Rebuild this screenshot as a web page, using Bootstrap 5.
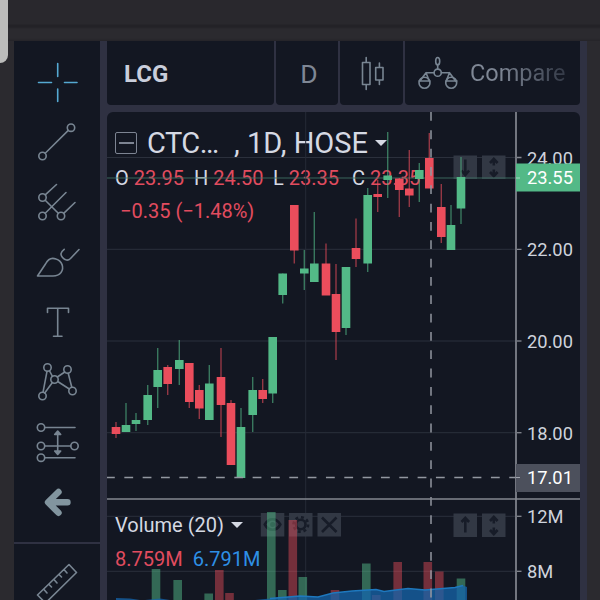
<!DOCTYPE html>
<html lang="en">
  <head>
    <meta charset="UTF-8" />
    <meta name="viewport" content="width=device-width, initial-scale=1.0" />
    <title>LCG Chart</title>
    <!-- Bootstrap CSS -->
    <link
      href="https://cdn.jsdelivr.net/npm/bootstrap@5.3.0/dist/css/bootstrap.min.css"
      rel="stylesheet"
    />
    <style>
      body {
        background: #2b2a2f;
        color: #d5d9e3;
        font-family: Roboto, sans-serif;
        line-height: 1;
      }
      .bezel {
        height: 41px;
        background: linear-gradient(#29282d 0 24px, #232227 25px 27px, #2b2a2f 29px 38px, #252429);
      }
      .knob {
        width: 8px;
        height: 63px;
        background: #bcbcbb;
        border-bottom-right-radius: 8px;
      }
      .app-shell {
        height: 559px;
        margin-left: 14px;
        margin-right: 13px;
        background: #2f3142;
      }
      .tools {
        width: 86px;
        background: #131722;
        padding-top: 12px;
      }
      .tools svg,
      .top-tabs svg {
        fill: none;
        stroke: #788592;
        stroke-width: 1.6;
        stroke-linecap: round;
        stroke-linejoin: round;
      }
      .tools svg { flex: none; width: 60px; height: 60px; }
      .tools .active { stroke: #55a9d2; }
      .tools .back { stroke: #82959f; stroke-width: 6.4; }
      .tool-split { height: 2px; margin: 9px 0; background: #2f3142; }
      .workspace { width: 473px; margin-left: 7px; }
      .top-tabs { height: 64px; gap: 2px; margin-bottom: 7px; }
      .top-tabs > div {
        background: #131722;
        border-radius: 0 0 4px 4px;
        color: #7f8795;
      }
      .tab-symbol { width: 167px; padding: 2px 0 0 17px; }
      .tab-symbol span { font-size: 24px; font-weight: 700; color: #c9cedb; }
      .tab-day { width: 62px; font-size: 26.5px; padding: 3px 0 0 4px; }
      .tab-style { width: 63px; }
      .tab-compare span {
        font-size: 23.5px;
        padding-top: 2px;
        background: linear-gradient(90deg, #7f8795 30%, #333946);
        -webkit-background-clip: text;
        background-clip: text;
        color: transparent;
      }
      .chart-box {
        height: 488px;
        background: #131722;
        border-radius: 6px 6px 0 0;
      }
      .legend-main { padding: 15px 0 0 8px; }
      .legend-title { font-size: 29px; height: 32px; }
      .legend-title .ticker { margin-left: 10px; width: 87px; letter-spacing: -0.5px; }
      .fold-box { width: 22px; height: 22px; border: 1.5px solid #7d8492; border-radius: 2px; }
      .fold-box i { width: 15px; height: 1.5px; background: #7d8492; }
      .tri {
        margin-left: 7px;
        border-left: 6.5px solid transparent;
        border-right: 6.5px solid transparent;
        border-top: 6.5px solid #d5d9e3;
      }
      .ohlc { font-size: 20px; margin-top: 9px; }
      .ohlc > span { width: 79px; }
      .ohlc .down { margin-left: 5px; }
      .down { color: #e14c5f; }
      .avg { color: #2e90e6; }
      .legend-change { font-size: 20px; margin: 13px 0 0 5px; }
      .legend-volume { top: 403px; left: 8px; font-size: 20px; }
      .volume-values { margin-top: 14px; gap: 10px; }
      .plot text { font-size: 18.3px; fill: #cfd3dc; }
    </style>
  </head>
  <body class="overflow-hidden">
    <div class="bezel"></div>
    <div class="knob position-absolute top-0 start-0"></div>

    <div class="app-shell d-flex">
      <!-- Drawing tools -->
      <div class="tools d-flex flex-column align-items-center flex-shrink-0">
        <svg class="active" viewBox="0 0 60 60"><path d="M11.5 29.5H24.5M37.5 29.5H50M30.7 10.5V23.5M30.7 36V48.5" /></svg>
        <svg viewBox="0 0 60 60"><circle cx="15.5" cy="43" r="3.7" /><circle cx="44" cy="14.7" r="3.7" /><path d="M18.2 40.3L41.3 17.4" /></svg>
        <svg viewBox="0 0 60 60">
          <circle cx="15.5" cy="24.5" r="3.7" /><circle cx="15.5" cy="43" r="3.7" /><circle cx="34" cy="43" r="3.7" />
          <path d="M18.2 21.8L29.5 11.5M18.2 27.2L31.3 40.3M18.2 40.3L39 19.5M36.7 40.3L48 29.5" />
        </svg>
        <svg viewBox="0 0 60 60">
          <path d="M10.5 43L18.5 31C21 26 25 24.5 29 26C35 28 37.5 34.5 34 39.5C32 42 29.5 43 26 43Z" />
          <path d="M37.2 16.3C33 19.5 33.5 22 35.5 24.5C38 27.5 41 28 43.5 25.5L52 16.5" />
        </svg>
        <svg viewBox="0 0 60 60"><path d="M20.5 19.5V15.2H41.5V19.5M30.7 15.2V43.3M26.5 43.3H35" /></svg>
        <svg viewBox="0 0 60 60">
          <circle cx="20.5" cy="14.5" r="3.7" /><circle cx="40.5" cy="16.5" r="3.7" /><circle cx="27.5" cy="26.5" r="3.7" />
          <circle cx="45.5" cy="38" r="3.7" /><circle cx="15.5" cy="43" r="3.7" />
          <path d="M20 18.3L16 39.3M22.5 17.8L25.5 23.5M37.8 19L30.3 24M41.2 20.2L44.8 34.3M30.7 28.5L42.3 36M25.4 29.5L17.7 40" />
        </svg>
        <svg viewBox="0 0 60 60">
          <circle cx="14" cy="14.5" r="3.7" /><circle cx="14" cy="33" r="3.7" /><circle cx="47.5" cy="33" r="3.7" /><circle cx="14" cy="44.7" r="3.7" />
          <path d="M17.7 14.5H48M17.7 33H43.8M17.7 44.7H48M30.7 20V40" />
          <path fill="#788592" d="M27.7 21.5L30.7 18L33.7 21.5ZM27.7 38L30.7 41.5L33.7 38Z" />
        </svg>
        <svg class="back" viewBox="0 0 60 60"><path d="M31.5 19L21 29.3L31.5 39.8M22 29.3H40.5" /></svg>
        <div class="tool-split align-self-stretch flex-shrink-0"></div>
        <svg viewBox="0 0 60 60">
          <path d="M42 11.5L49.5 19.5L18.5 50L10.5 42ZM37 16.5L40 20M32 21.5L34.5 24M27 26.5L30 30M22 31.5L24.5 34M17 36.5L20 40" />
        </svg>
      </div>

      <div class="workspace flex-shrink-0">
        <!-- Header -->
        <div class="top-tabs d-flex">
          <div class="tab-symbol d-flex align-items-center"><span>LCG</span></div>
          <div class="tab-day d-flex align-items-center justify-content-center">D</div>
          <div class="tab-style">
            <svg width="63" height="64" viewBox="0 0 63 64">
              <path d="M22.5 21.5H30V43.5H22.5ZM26.2 16.5V21.5M26.2 43.5V48.5M35.7 26.5H43V39H35.7ZM39.4 22V26.5M39.4 39V43.5" />
            </svg>
          </div>
          <div class="tab-compare d-flex align-items-center flex-grow-1">
            <svg width="65" height="64" viewBox="0 0 65 64">
              <ellipse cx="32.7" cy="20.2" rx="2" ry="3.7" /><circle cx="32.7" cy="31.7" r="3.6" />
              <path d="M32.7 24V28M29 31.7H21L14.5 40.5M21 31.7L24.5 40.5M36.4 31.7H44.5L41 40.5M44.5 31.7L51 40.5M14 40H25M41 40H52" />
              <circle cx="19.5" cy="41.8" r="5.5" /><circle cx="46.2" cy="41.8" r="5.5" />
            </svg>
            <span>Compare</span>
          </div>
        </div>

        <!-- Chart -->
        <div class="chart-box position-relative overflow-hidden">
          <div class="legend-main">
            <div class="legend-title d-flex align-items-center">
              <div class="fold-box d-flex align-items-center justify-content-center"><i></i></div>
              <span class="ticker">CTC…</span><span>, 1D, HOSE</span>
              <div class="tri"></div>
            </div>
            <div class="ohlc d-flex" id="ohlc"></div>
            <div class="legend-change down">−0.35 (−1.48%)</div>
          </div>
          <div class="legend-volume position-absolute">
            <div class="d-flex align-items-center">Volume (20)<div class="tri"></div></div>
            <div class="volume-values d-flex"><span class="down">8.759M</span><span class="avg">6.791M</span></div>
          </div>
          <svg class="plot position-absolute top-0 start-0" id="plot" width="473" height="488" viewBox="107 112 473 488"></svg>
        </div>
      </div>
    </div>

    <script>
      const GREEN = "#53b987";
      const RED = "#eb4d5c";

      // x, high, body top, body bottom, low, up
      const candles = [
        [116, 422, 427, 434, 438, 0],
        [126, 403, 425, 432, 432, 1],
        [136, 413, 420, 424, 431, 1],
        [147.7, 385, 395, 420, 425, 1],
        [157.7, 348, 370, 387, 408, 1],
        [167.7, 365, 367, 384, 395, 0],
        [179.3, 340, 360, 369, 385, 1],
        [189.3, 363, 363, 402, 408, 0],
        [199.3, 385, 390, 408.5, 419, 0],
        [209.3, 365, 383.5, 420, 420, 1],
        [221, 348, 377, 405, 437, 0],
        [231, 400, 403, 465, 465, 0],
        [241, 408, 427, 478, 478, 1],
        [252.7, 377, 390, 415, 432, 1],
        [262.7, 379, 390, 399, 403, 0],
        [272.7, 337, 337, 393.5, 403, 1],
        [282.7, 273.5, 273.5, 295, 303.5, 1],
        [294.3, 205, 205, 250.5, 263.5, 0],
        [304.3, 250, 268.5, 273.5, 290, 1],
        [314.3, 212, 263.5, 282, 282, 1],
        [326, 243.5, 263.5, 295.5, 295, 0],
        [336, 264, 294, 332, 360, 0],
        [346, 267, 267, 328, 335, 1],
        [356, 218.5, 248, 259, 267, 0],
        [367.7, 188, 195, 263.5, 272, 1],
        [377.7, 180, 194, 197, 212, 0],
        [387.7, 132, 175.5, 180, 198, 1],
        [399.3, 178, 178.5, 190, 217, 0],
        [409.3, 150, 188.5, 195.5, 207, 0],
        [419.3, 163, 170, 179, 202, 1],
        [429.3, 133, 158, 188.5, 188, 0],
        [441.3, 184, 207, 237, 243, 0],
        [451, 205, 225, 250, 250, 1],
        [461, 157, 177, 208.5, 224, 1],
      ];

      // x, top, up
      const volumes = [
        [156, 569, 1], [177.7, 580, 1], [208.7, 593.5, 1], [219.3, 570, 0],
        [229.5, 593, 0], [271.3, 512, 1], [282.3, 590, 1], [292.8, 520, 0],
        [302.8, 577, 1], [335, 590, 0], [366.3, 563.5, 1], [376.3, 595, 0],
        [397.7, 562, 0], [427.8, 562, 0], [439.3, 571.5, 0], [461, 578.5, 1],
      ];

      const labels = [
        [157.5, "24.00"], [249.3, "22.00"], [341, "20.00"], [432.7, "18.00"],
        [516.3, "12M"], [571.3, "8M"],
      ];

      function line(x1, y1, x2, y2, color, width = 1, extra = "") {
        return `<line x1="${x1}" y1="${y1}" x2="${x2}" y2="${y2}" stroke="${color}" stroke-width="${width}" ${extra}/>`;
      }

      function rect(x, y, w, h, fill, opacity = 1) {
        return `<rect x="${x}" y="${y}" width="${w}" height="${h}" fill="${fill}" opacity="${opacity}"/>`;
      }

      // small square pane button with a glyph drawn on a 24x24 grid
      function paneButton(x, y, glyph) {
        return `<g transform="translate(${x} ${y})"><rect width="23.5" height="23.5" fill="#323844"/>
          <g fill="none" stroke="#171c28" stroke-width="2.6">${glyph}</g></g>`;
      }

      const upDown = '<path d="M11.8 4V10M8 7.5L11.8 3.5L15.6 7.5M11.8 14V20M8 16.5L11.8 20.5L15.6 16.5"/>';

      function drawPlot() {
        let out = "";

        labels.forEach(([y]) => {
          out += line(107, y, 515, y, "#2b303c", 1);
        });
        out += line(305.7, 112, 305.7, 600, "#262b37", 1);

        out += paneButton(453.5, 155.5, '<path d="M11.8 4V19M8 15L11.8 19.5L15.6 15"/>');
        out += paneButton(482, 155.5, upDown);
        out += paneButton(453.5, 513.5, '<path d="M11.8 19V5M8 8.5L11.8 4.5L15.6 8.5"/>');
        out += paneButton(482, 513.5, upDown);
        out += paneButton(260.8, 513, '<path d="M4 11.5C8 4.5 15.5 4.5 19.5 11.5C15.5 18.5 8 18.5 4 11.5Z"/><circle cx="11.8" cy="11.5" r="1.2"/>');
        out += paneButton(289, 513, '<circle cx="11.8" cy="11.5" r="4.7"/><circle cx="11.8" cy="11.5" r="7.3" stroke-dasharray="2.9 2.83"/>');
        out += paneButton(317.5, 513, '<path d="M4.5 4.5L19 19M19 4.5L4.5 19"/>');

        volumes.forEach(([x, top, up]) => {
          out += rect(x - 4.3, top, 8.6, 600 - top, up ? GREEN : RED, up ? 0.5 : 0.45);
        });
        // moving average area
        out += '<path d="M116 600V598L130 598.5L140 600ZM145 600L160 598.5L170 600ZM255 600L270 598.5L300 596L318 597L333 593L352 591L376 589.5L384 591.5L408 588.5L425 590L455 587.5L463 585.5L467 587V600Z" fill="#1565ac" opacity="0.75"/>';
        out += '<path d="M270 598.5L300 596L318 597L333 593L352 591L376 589.5L384 591.5L408 588.5L425 590L455 587.5L463 585.5" fill="none" stroke="#1e78be" stroke-width="1.3"/>';

        out += line(107, 178, 516, 178, "#417566", 1, 'opacity="0.85"');
        candles.forEach(([x, high, top, bottom, low, up]) => {
          const color = up ? GREEN : RED;
          out += line(x, high, x, low, color, 1.4, 'opacity="0.6"');
          out += rect(x - 4.3, top, 8.6, bottom - top, color);
        });

        // crosshair
        out += line(431, 112, 431, 600, "#9297a0", 1.5, 'stroke-dasharray="8.8 9.53"');
        out += line(107, 477.5, 516, 477.5, "#9297a0", 1.5, 'stroke-dasharray="8.8 9.53" stroke-dashoffset="1"');

        // axes
        out += line(107, 499, 580, 499, "#858891", 1.5);
        out += line(516, 112, 516, 600, "#858891", 1.7);
        labels.forEach(([y, text]) => {
          out += line(517, y, 521.5, y, "#858891", 1.3);
          out += `<text x="527" y="${y + 7}">${text}</text>`;
        });
        out += rect(516, 163.5, 64, 28, GREEN) + '<text x="527" y="184" style="fill:#fff">23.55</text>';
        out += rect(516, 464, 64, 28, "#4c505c") + '<text x="527" y="484" style="fill:#fff">17.01</text>';
        out += line(516, 178, 520, 178, "#a5dcc2") + line(516, 477.5, 520, 477.5, "#a0a4ad");
        document.getElementById("plot").innerHTML = out;
      }

      function drawLegend() {
        const values = { O: "23.95", H: "24.50", L: "23.35", C: "23.35" };
        document.getElementById("ohlc").innerHTML = Object.entries(values)
          .map(([key, value]) => `<span>${key}<span class="down">${value}</span></span>`)
          .join("");
      }

      drawPlot();
      drawLegend();
    </script>

    <!-- Bootstrap JS -->
    <script src="https://cdn.jsdelivr.net/npm/bootstrap@5.3.0/dist/js/bootstrap.bundle.min.js"></script>
  </body>
</html>
